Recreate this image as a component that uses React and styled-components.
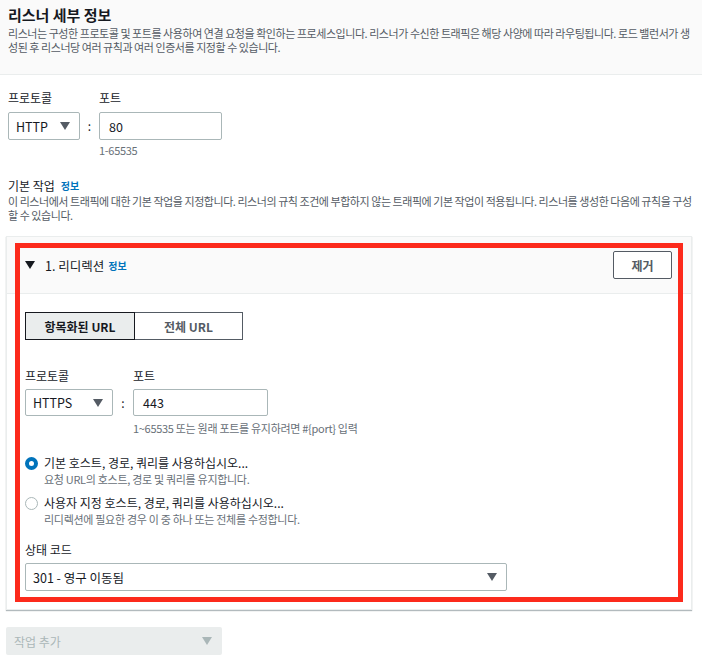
import React from "react";
import styled, { createGlobalStyle } from "styled-components";

const GlobalStyle = createGlobalStyle`
  body {
    margin: 0;
    background: #ffffff;
    font-family: "Noto Sans CJK KR", "Open Sans", sans-serif;
    color: #16191f;
  }
`;

const Page = styled.div`
  position: relative;
  width: 702px;
  min-height: 666px;
`;

const Header = styled.div`
  height: 69px;
  padding: 5px 8px 0;
  background: #fafafa;
  border-bottom: 1px solid #eaeded;
`;

const Title = styled.h2`
  margin: 0;
  font-size: 15px;
  line-height: 20px;
  font-weight: 700;
`;

const Desc = styled.p`
  margin: ${(p) => p.$mt ?? 0}px 0 0;
  font-size: 11px;
  line-height: 14px;
  color: #545b64;
  letter-spacing: -0.45px;
`;

const Body = styled.div`
  padding: 15px 10px 0 6px;
`;

const Block = styled.div`
  padding-left: ${(p) => p.$pl ?? 0}px;
  margin-top: ${(p) => p.$mt ?? 0}px;
`;

const FieldRow = styled.div`
  display: flex;
  align-items: flex-start;
`;

const Field = styled.div`
  display: flex;
  flex-direction: column;
`;

const Label = styled.div`
  font-size: 12px;
  line-height: 16px;
  margin-bottom: ${(p) => p.$mb ?? 6}px;
  display: flex;
  align-items: center;
  gap: 6px;
`;

const Info = styled.span`
  color: #0073bb;
  font-weight: 700;
  font-size: 10px;
`;

const Select = styled.div`
  box-sizing: border-box;
  width: ${(p) => p.$w}px;
  height: ${(p) => p.$h ?? 28}px;
  border: 1px solid #aab7b8;
  border-radius: 2px;
  display: flex;
  align-items: center;
  justify-content: space-between;
  padding: 0 9px 0 7px;
  font-size: 12.5px;
  background: #fff;
`;

const Caret = styled.span`
  width: 0;
  height: 0;
  border-left: 5px solid transparent;
  border-right: 5px solid transparent;
  border-top: 8px solid #545b64;
`;

const Colon = styled.div`
  width: ${(p) => p.$w}px;
  text-align: center;
  font-size: 12px;
  line-height: ${(p) => p.$h ?? 28}px;
  margin-top: ${(p) => p.$top ?? 22}px;
`;

const Input = styled.div`
  box-sizing: border-box;
  width: ${(p) => p.$w}px;
  height: ${(p) => p.$h ?? 28}px;
  border: 1px solid #aab7b8;
  border-radius: 2px;
  display: flex;
  align-items: center;
  padding: 0 9px;
  font-size: 12.5px;
`;

const Hint = styled.div`
  margin-top: ${(p) => p.$mt ?? 3}px;
  font-size: 11px;
  line-height: 14px;
  color: #687078;
  letter-spacing: -0.3px;
`;

const Panel = styled.div`
  margin-top: 14px;
  border: 1px solid #eaeded;
  box-shadow: 0 1px 1px 0 rgba(0, 28, 36, 0.3);
`;

const PanelHead = styled.div`
  height: 57px;
  box-sizing: border-box;
  background: #fafafa;
  border-bottom: 1px solid #eaeded;
  display: flex;
  align-items: center;
  justify-content: space-between;
  padding: 0 19px 0 18px;
`;

const HeadTitle = styled.div`
  display: flex;
  align-items: center;
  font-size: 12.5px;
  gap: 4px;
`;

const Toggle = styled.span`
  width: 0;
  height: 0;
  border-left: 5px solid transparent;
  border-right: 5px solid transparent;
  border-top: 8px solid #16191f;
  margin-right: 6px;
`;

const Button = styled.button`
  box-sizing: border-box;
  width: 59px;
  height: 28px;
  border: 1px solid #545b64;
  border-radius: 2px;
  background: #fff;
  color: #545b64;
  font-family: inherit;
  font-weight: 700;
  font-size: 12px;
`;

const PanelBody = styled.div`
  padding: 18px 18px 18px;
`;

const Segments = styled.div`
  display: flex;
`;

const Segment = styled.div`
  box-sizing: border-box;
  width: ${(p) => p.$w}px;
  height: 28px;
  display: flex;
  align-items: center;
  justify-content: center;
  font-size: 12px;
  font-weight: 700;
  background: ${(p) => (p.$on ? "#eaeded" : "#fff")};
  color: ${(p) => (p.$on ? "#16191f" : "#545b64")};
  border: 1px solid ${(p) => (p.$on ? "#16191f" : "#545b64")};
  & + & {
    border-left: none;
  }
`;

const RadioRow = styled.div`
  display: flex;
  gap: 6px;
  margin-top: ${(p) => p.$mt}px;
`;

const Radio = styled.span`
  box-sizing: border-box;
  flex: none;
  width: 13px;
  height: 13px;
  margin-top: 2px;
  border-radius: 50%;
  border: ${(p) => (p.$on ? "4px solid #0073bb" : "1px solid #aab7b8")};
  background: #fff;
`;

const RadioText = styled.div`
  font-size: 12px;
  line-height: 16px;
`;

const RadioSub = styled.div`
  margin-top: 1px;
  font-size: 11px;
  line-height: 14px;
  color: #687078;
  letter-spacing: -0.3px;
`;

const AddButton = styled.div`
  box-sizing: border-box;
  margin-top: 17px;
  width: 216px;
  height: 28px;
  border-radius: 2px;
  background: #eaeded;
  color: #aab7b8;
  font-size: 12px;
  display: flex;
  align-items: center;
  justify-content: space-between;
  padding: 0 10px 0 8px;
  & > span:last-child {
    border-top-color: #aab7b8;
  }
`;

const Highlight = styled.div`
  position: absolute;
  left: 15px;
  top: 243px;
  width: 668px;
  height: 359px;
  box-sizing: border-box;
  border: 5px solid #fc2a1c;
  pointer-events: none;
`;

export default function App() {
  return (
    <Page>
      <GlobalStyle />
      <Header>
        <Title>리스너 세부 정보</Title>
        <Desc $mt={1}>
          리스너는 구성한 프로토콜 및 포트를 사용하여 연결 요청을 확인하는 프로세스입니다. 리스너가 수신한 트래픽은 해당 사양에 따라 라우팅됩니다. 로드 밸런서가 생성된 후 리스너당 여러 규칙과 여러 인증서를 지정할 수 있습니다.
        </Desc>
      </Header>
      <Body>
        <Block $pl={2}>
          <FieldRow>
            <Field>
              <Label>프로토콜</Label>
              <Select $w={72}>
                HTTP <Caret />
              </Select>
            </Field>
            <Colon $w={19}>:</Colon>
            <Field>
              <Label>포트</Label>
              <Input $w={123}>80</Input>
              <Hint>1-65535</Hint>
            </Field>
          </FieldRow>
        </Block>
        <Block $pl={2} $mt={21}>
          <Label $mb={0}>
            기본 작업 <Info>정보</Info>
          </Label>
          <Desc>
            이 리스너에서 트래픽에 대한 기본 작업을 지정합니다. 리스너의 규칙 조건에 부합하지 않는 트래픽에 기본 작업이 적용됩니다. 리스너를 생성한 다음에 규칙을 구성할 수 있습니다.
          </Desc>
        </Block>
        <Panel>
          <PanelHead>
            <HeadTitle>
              <Toggle />
              1. 리디렉션 <Info>정보</Info>
            </HeadTitle>
            <Button>제거</Button>
          </PanelHead>
          <PanelBody>
            <Segments>
              <Segment $w={110} $on>
                항목화된 URL
              </Segment>
              <Segment $w={108}>전체 URL</Segment>
            </Segments>
            <Block $mt={28}>
              <FieldRow>
                <Field>
                  <Label $mb={5}>프로토콜</Label>
                  <Select $w={88} $h={27}>
                    HTTPS <Caret />
                  </Select>
                </Field>
                <Colon $w={20} $h={27} $top={21}>
                  :
                </Colon>
                <Field>
                  <Label $mb={5}>포트</Label>
                  <Input $w={135} $h={27}>
                    443
                  </Input>
                  <Hint $mt={5}>1~65535 또는 원래 포트를 유지하려면 #{"{port}"} 입력</Hint>
                </Field>
              </FieldRow>
            </Block>
            <RadioRow $mt={20}>
              <Radio $on />
              <div>
                <RadioText>기본 호스트, 경로, 쿼리를 사용하십시오...</RadioText>
                <RadioSub>요청 URL의 호스트, 경로 및 쿼리를 유지합니다.</RadioSub>
              </div>
            </RadioRow>
            <RadioRow $mt={9}>
              <Radio />
              <div>
                <RadioText>사용자 지정 호스트, 경로, 쿼리를 사용하십시오...</RadioText>
                <RadioSub>리디렉션에 필요한 경우 이 중 하나 또는 전체를 수정합니다.</RadioSub>
              </div>
            </RadioRow>
            <Block $mt={16}>
              <Label $mb={5}>상태 코드</Label>
              <Select $w={482}>
                301 - 영구 이동됨 <Caret />
              </Select>
            </Block>
          </PanelBody>
        </Panel>
        <AddButton>
          작업 추가 <Caret />
        </AddButton>
      </Body>
      <Highlight />
    </Page>
  );
}
